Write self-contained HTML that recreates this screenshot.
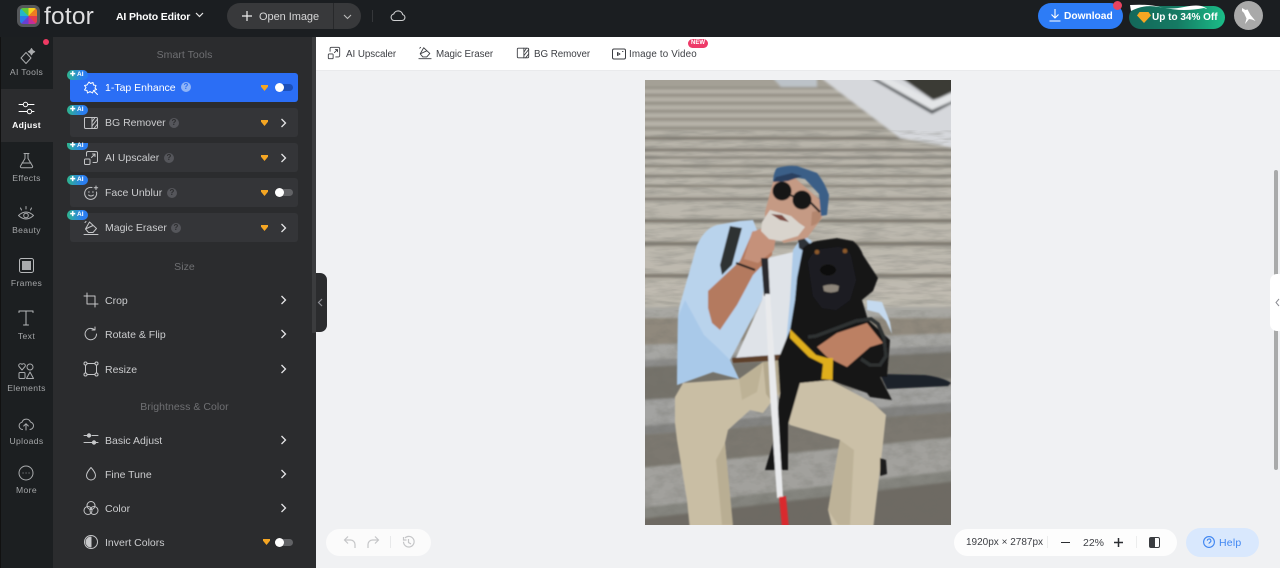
<!DOCTYPE html>
<html><head><meta charset="utf-8"><title>Fotor</title>
<style>
*{box-sizing:border-box}
html,body{margin:0;width:1280px;height:568px;overflow:hidden;background:#f0f1f3;font-family:"Liberation Sans",sans-serif}
.a{position:absolute}
.t{position:absolute;white-space:nowrap;line-height:14px;height:14px;margin-top:1px;font-size:10.5px;letter-spacing:0;color:#cbccce}
.r{position:absolute;width:53px;left:0;text-align:center;white-space:nowrap;font-size:8.6px;letter-spacing:.35px;line-height:12px;color:#a4a6a8}
.h{position:absolute;left:53px;width:263px;text-align:center;font-size:10.5px;letter-spacing:.05px;line-height:14px;color:#6f7073}
.row{position:absolute;left:70px;width:228px;height:29px;background:#343538;border-radius:3px}
.ai{position:absolute;left:67px;width:21px;height:10px;border-radius:5px;background:linear-gradient(90deg,#2fb58d,#2a7df0 75%);color:#fff;font:bold 6.5px/10px "Liberation Sans",sans-serif;padding-left:3px;white-space:nowrap}
.q{position:absolute;width:10px;height:10px;border-radius:50%;background:#55565b;color:#2c2d2f;font:bold 8px/10px "Liberation Sans",sans-serif;text-align:center}
.tg{position:absolute;left:275px;width:18px;height:7px;border-radius:4px;background:#626366}
.tg:before{content:"";position:absolute;left:0;top:-1px;width:9px;height:9px;border-radius:50%;background:#fff}
svg{position:absolute;overflow:visible}
.i{width:16px;height:16px;fill:none;stroke:#c4c5c7;stroke-width:1;stroke-linecap:round;stroke-linejoin:round}
.ch{width:8px;height:10px;fill:none;stroke:#e4e4e6;stroke-width:1.3;left:279px}
.gem{width:7px;height:6px;left:261px}
</style></head><body>
<svg width="0" height="0" style="position:absolute"><defs>
<symbol id="up" viewBox="0 0 16 16"><rect x="1.5" y="9" width="5.5" height="5.5" rx="1"/><path d="M3.5 6V3a1.5 1.5 0 0 1 1.5-1.5h8A1.5 1.5 0 0 1 14.5 3v8a1.5 1.5 0 0 1-1.5 1.5H10M8.5 7.5l3.5-3.5M9.500 4H12v2.500"/></symbol>
<symbol id="er" viewBox="0 0 16 16"><path d="M6.500 2l7 6.500-3.500 4H5.500L2.500 9zM2.500 9l7.500-3.500M1 14.500h14M3 1.500l-1 1"/></symbol>
<symbol id="bg" viewBox="0 0 16 16"><rect x="1.500" y="2.500" width="13" height="11" rx="1.200"/><path d="M9 2.500v11M9 7l3-4.500M9 11l5.500-7M11 13.500l3.500-4.500"/></symbol>
<symbol id="gem" viewBox="0 0 7 6"><path d="M0 0h7v1.800L3.500 6 0 1.800z" fill="#f5a623"/></symbol>
<symbol id="chev" viewBox="0 0 8 10"><path d="M2.500 1l4 4-4 4"/></symbol>
</defs></svg>

<!-- top bar -->
<div class="a" style="left:0;top:0;width:1280px;height:37px;background:#1b1e21"></div>
<div class="a" style="left:17px;top:5px;width:23px;height:22px;border-radius:6px;background:#55575a"></div>
<div class="a" style="left:20px;top:8px;width:17px;height:16px;border-radius:3px;background:conic-gradient(#f6d21f 0 12%,#ef7c22 12% 25%,#e63b4e 25% 38%,#c32f9a 38% 50%,#6a3fd0 50% 62%,#2b7be8 62% 75%,#24b7c9 75% 87%,#5ec63c 87% 100%)"></div>
<div class="a" style="left:44px;top:2px;font-size:24.5px;line-height:30px;color:#dfdfe0;letter-spacing:.2px">fotor</div>
<div class="t" style="left:116px;top:9px;color:#fff;font-weight:bold;font-size:10.5px;letter-spacing:-.15px">AI Photo Editor</div>
<svg style="left:195px;top:12px" width="9" height="7" fill="none" stroke="#e8e8e8" stroke-width="1.200"><path d="M1 1l3.500 3.500L8 1"/></svg>
<div class="a" style="left:227px;top:3px;width:134px;height:26px;border-radius:13px;background:#38393b"></div>
<div class="a" style="left:333px;top:3px;width:1px;height:26px;background:#28292b"></div>
<svg style="left:242px;top:11px" width="10" height="10" stroke="#eee" stroke-width="1.200"><path d="M5 0v10M0 5h10"/></svg>
<div class="t" style="left:259px;top:9px;font-size:11px;letter-spacing:-.05px;color:#d6d6d7">Open Image</div>
<svg style="left:343px;top:14px" width="9" height="6" fill="none" stroke="#bbb" stroke-width="1.100"><path d="M1 1l3.500 3.500L8 1"/></svg>
<div class="a" style="left:372px;top:10px;width:1px;height:12px;background:#35373a"></div>
<svg style="left:390px;top:9px" width="16" height="13" fill="none" stroke="#cfd0d1" stroke-width="1.100"><path d="M4 11.500h8a3 3 0 0 0 .7-5.900A4.700 4.700 0 0 0 3.700 5 3.300 3.300 0 0 0 4 11.500z"/></svg>

<div class="a" style="left:1038px;top:3px;width:85px;height:26px;border-radius:13px;background:#2d7cf6"></div>
<svg style="left:1049px;top:9px" width="12" height="13" fill="none" stroke="#fff" stroke-width="1.100"><path d="M6 0v8.500M2.500 5.500L6 9l3.500-3.500M.5 12h11"/></svg>
<div class="t" style="left:1064px;top:9px;color:#fff;font-size:10.2px;font-weight:bold;letter-spacing:0">Download</div>
<div class="a" style="left:1113px;top:1px;width:9px;height:9px;border-radius:50%;background:#e8435f"></div>
<div class="a" style="left:1129px;top:6px;width:96px;height:23px;border-radius:12px;background:linear-gradient(90deg,#14685a,#157a63 50%,#1bbd88)"></div>
<svg style="left:1129px;top:3px" width="76" height="8"><path d="M1 2q20-1 30 2t24 0 20 0 0 1q-10 2-20 2t-25-3-28 4z" fill="#fff"/></svg>
<svg style="left:1137px;top:12px" width="14" height="11"><path d="M2.500 0h9L14 3.500 7 11 0 3.500z" fill="#f5a623"/></svg>
<div class="t" style="left:1152px;top:10px;color:#fff;font-size:10px;font-weight:bold;letter-spacing:0">Up to 34% Off</div>
<div class="a" style="left:1234px;top:1px;width:29px;height:29px;border-radius:50%;background:#a9a9a9"></div>
<svg style="left:1241px;top:7px" width="16" height="18"><path d="M1 1l3.500 2 2 -.5 3 5.500 5 6-3.500-1.500-3-.5L4 17l1.500-5.500L3 6 1 4z" fill="#fff"/></svg>

<!-- rail -->
<div class="a" style="left:0;top:37px;width:53px;height:531px;background:#1c1f21"></div>
<div class="a" style="left:0;top:37px;width:1px;height:531px;background:#111"></div>
<div class="a" style="left:1px;top:89px;width:52px;height:53px;background:#2b2c2e"></div>
<div class="a" style="left:43px;top:39px;width:6px;height:6px;border-radius:50%;background:#ef3a63"></div>
<svg class="i" style="left:18px;top:47px;width:18px;height:18px;stroke:#a9abad"><path d="M8 5.500l5 5.500-5 5.500L3 11z"/><path d="M13.500 1.500l1.200 2 2 1.200-2 1.200-1.200 2-1.200-2-2-1.200 2-1.200z" fill="#a9abad"/></svg>
<div class="r" style="top:66px">AI Tools</div>
<svg class="i" style="left:18px;top:100px;stroke:#fff"><path d="M1 4.500h4M10 4.500h6M1 11.500h8M14 11.500h2"/><circle cx="7.500" cy="4.500" r="2.200"/><circle cx="11.500" cy="11.500" r="2.200"/></svg>
<div class="r" style="top:119px;color:#fff;font-weight:bold">Adjust</div>
<svg class="i" style="left:18px;top:152px;stroke:#a9abad;width:17px;height:17px"><path d="M6 1.500h5M7 1.500v5L2.500 14a1.200 1.200 0 0 0 1 1.800h10a1.200 1.200 0 0 0 1-1.800L10 6.500v-5M4 11h9"/></svg>
<div class="r" style="top:172px">Effects</div>
<svg class="i" style="left:17px;top:205px;stroke:#a9abad;width:18px;height:18px"><path d="M1.500 10.500q7.500-7 15 0q-7.500 7-15 0z"/><circle cx="9" cy="10.500" r="2.300"/><path d="M9 1.500v2.500M3.500 3l1 2M14.500 3l-1 2"/></svg>
<div class="r" style="top:224px">Beauty</div>
<svg class="i" style="left:19px;top:258px;stroke:#b6b8ba"><rect x=".5" y=".5" width="14" height="14" rx="2"/><rect x="3" y="3" width="9" height="9" fill="#a9abad" stroke="none"/></svg>
<div class="r" style="top:277px">Frames</div>
<svg class="i" style="left:18px;top:310px;stroke:#b6b8ba"><path d="M1 2.500V1h14v1.500M8 1v14M5.500 15h5"/></svg>
<div class="r" style="top:330px">Text</div>
<svg class="i" style="left:18px;top:363px;stroke:#a9abad"><path d="M4 7L1 3.500A1.800 1.800 0 0 1 4 1.500 1.800 1.800 0 0 1 7 3.500z"/><circle cx="12" cy="4" r="3"/><rect x="1" y="9.500" width="6" height="6" rx="1"/><path d="M12 9l3.500 6.500h-7z"/></svg>
<div class="r" style="top:382px">Elements</div>
<svg class="i" style="left:18px;top:416px;stroke:#a9abad"><path d="M4.500 13.500A3.700 3.700 0 0 1 4 6.200a4.500 4.500 0 0 1 8.500-.2 3.800 3.800 0 0 1-.5 7.500M8 14V8M5.700 10L8 7.700l2.300 2.300"/></svg>
<div class="r" style="top:435px">Uploads</div>
<svg class="i" style="left:18px;top:465px;stroke:#a9abad"><circle cx="8" cy="8" r="7"/><path d="M5 8h.1M8 8h.1M11 8h.1"/></svg>
<div class="r" style="top:484px">More</div>

<!-- panel -->
<div class="a" style="left:53px;top:37px;width:263px;height:531px;background:#2b2c2e"></div>
<div class="a" style="left:312px;top:37px;width:4px;height:296px;background:#3b3c3e"></div>
<div class="a" style="left:316px;top:273px;width:11px;height:59px;background:#2b2c2e;border-radius:0 7px 7px 0"></div>
<svg style="left:317px;top:298px" width="6" height="9" fill="none" stroke="#8d8e94" stroke-width="1.200"><path d="M5 1L1.500 4.500 5 8"/></svg>

<div class="h" style="top:48px">Smart Tools</div>
<div class="row" style="top:73px;background:#2b6ef5"></div>
<div class="row" style="top:108px"></div>
<div class="row" style="top:143px"></div>
<div class="row" style="top:178px"></div>
<div class="row" style="top:213px"></div>
<div class="ai" style="top:70px">✚ AI</div>
<div class="ai" style="top:105px">✚ AI</div>
<div class="ai" style="top:143px;height:7px;line-height:5px;border-radius:0 0 5px 5px">✚ AI</div>
<div class="ai" style="top:175px">✚ AI</div>
<div class="ai" style="top:210px">✚ AI</div>

<svg class="i" style="left:83px;top:80px;stroke:#fff"><path d="M6 2l1.500 1.500L10 2.500l.5 2.500 2.500.5-1 2.500 1.500 1.500-3 1-1 2.500L7 11.500 4.500 13 4 10.500 1.500 10 3 7.500 1.500 5.500 4 5zM11 11l3.500 3.500"/></svg>
<div class="t" style="left:105px;top:80px;color:#fff">1-Tap Enhance</div>
<div class="q" style="left:181px;top:82px;background:#8fb4f7;color:#2b6ef5">?</div>
<svg class="gem" style="top:85px"><use href="#gem"/></svg>
<div class="tg" style="top:84px;background:#1c4fb8"></div>

<svg class="i" style="left:83px;top:115px"><use href="#bg"/></svg>
<div class="t" style="left:105px;top:115px">BG Remover</div>
<div class="q" style="left:169px;top:118px">?</div>
<svg class="gem" style="top:120px"><use href="#gem"/></svg>
<svg class="ch" style="top:118px"><use href="#chev"/></svg>

<svg class="i" style="left:83px;top:150px"><use href="#up"/></svg>
<div class="t" style="left:105px;top:150px">AI Upscaler</div>
<div class="q" style="left:164px;top:153px">?</div>
<svg class="gem" style="top:155px"><use href="#gem"/></svg>
<svg class="ch" style="top:153px"><use href="#chev"/></svg>

<svg class="i" style="left:83px;top:185px"><path d="M13.500 7a6 6 0 1 1-4.500-4.500M5.500 7h.8M9.500 7h.8M5.500 10q2.500 2 5 0M13 1v3.500M11.200 2.700h3.500"/></svg>
<div class="t" style="left:105px;top:185px">Face Unblur</div>
<div class="q" style="left:167px;top:188px">?</div>
<svg class="gem" style="top:190px"><use href="#gem"/></svg>
<div class="tg" style="top:189px"></div>

<svg class="i" style="left:83px;top:220px"><use href="#er"/></svg>
<div class="t" style="left:105px;top:220px">Magic Eraser</div>
<div class="q" style="left:171px;top:223px">?</div>
<svg class="gem" style="top:225px"><use href="#gem"/></svg>
<svg class="ch" style="top:223px"><use href="#chev"/></svg>

<div class="h" style="top:260px">Size</div>
<svg class="i" style="left:83px;top:292px"><path d="M4 1v11h11M1 4h11v11"/></svg>
<div class="t" style="left:105px;top:293px">Crop</div>
<svg class="ch" style="top:295px"><use href="#chev"/></svg>
<svg class="i" style="left:83px;top:326px"><path d="M13.500 8a5.700 5.700 0 1 1-2-4.300M12 1v3h-3"/></svg>
<div class="t" style="left:105px;top:327px">Rotate &amp; Flip</div>
<svg class="ch" style="top:329px"><use href="#chev"/></svg>
<svg class="i" style="left:83px;top:361px"><rect x="2.500" y="2.500" width="11" height="11"/><rect x="1" y="1" width="3" height="3" rx="1.400" fill="#2b2c2e"/><rect x="12" y="1" width="3" height="3" rx="1.400" fill="#2b2c2e"/><rect x="1" y="12" width="3" height="3" rx="1.400" fill="#2b2c2e"/><rect x="12" y="12" width="3" height="3" rx="1.400" fill="#2b2c2e"/></svg>
<div class="t" style="left:105px;top:362px">Resize</div>
<svg class="ch" style="top:364px"><use href="#chev"/></svg>

<div class="h" style="top:400px">Brightness &amp; Color</div>
<svg class="i" style="left:83px;top:431px"><path d="M1 4.500h3M9 4.500h6M1 11.500h8M13 11.500h2"/><circle cx="6" cy="4.500" r="1.700" fill="#c9cacc"/><circle cx="11" cy="11.500" r="1.700" fill="#c9cacc"/></svg>
<div class="t" style="left:105px;top:433px">Basic Adjust</div>
<svg class="ch" style="top:435px"><use href="#chev"/></svg>
<svg class="i" style="left:83px;top:466px"><path d="M8 1.500q4.500 5 4.500 8a4.500 4.500 0 0 1-9 0q0-3 4.500-8z"/></svg>
<div class="t" style="left:105px;top:467px">Fine Tune</div>
<svg class="ch" style="top:469px"><use href="#chev"/></svg>
<svg class="i" style="left:83px;top:500px"><circle cx="8" cy="5.500" r="4"/><circle cx="5" cy="10.500" r="4"/><circle cx="11" cy="10.500" r="4"/></svg>
<div class="t" style="left:105px;top:501px">Color</div>
<svg class="ch" style="top:503px"><use href="#chev"/></svg>
<svg class="i" style="left:83px;top:534px"><circle cx="8" cy="8" r="6.500"/><path d="M8 3a5 5 0 0 0 0 10z" fill="#c9cacc"/></svg>
<div class="t" style="left:105px;top:535px">Invert Colors</div>
<svg class="gem" style="top:539px;left:263px"><use href="#gem"/></svg>
<div class="tg" style="top:539px"></div>

<!-- second bar -->
<div class="a" style="left:316px;top:37px;width:964px;height:34px;background:#fff;border-bottom:1px solid #e9eaec"></div>
<svg class="i" style="left:327px;top:46px;width:14px;height:14px;stroke:#3b3d42"><use href="#up"/></svg>
<div class="t" style="left:346px;top:47px;color:#3d3f44;font-size:9.8px;letter-spacing:-.05px">AI Upscaler</div>
<svg class="i" style="left:418px;top:46px;width:14px;height:14px;stroke:#3b3d42"><use href="#er"/></svg>
<div class="t" style="left:436px;top:47px;color:#3d3f44;font-size:9.8px;letter-spacing:-.05px">Magic Eraser</div>
<svg class="i" style="left:516px;top:46px;width:14px;height:14px;stroke:#3b3d42"><use href="#bg"/></svg>
<div class="t" style="left:534px;top:47px;color:#3d3f44;font-size:9.8px;letter-spacing:-.05px">BG Remover</div>
<svg class="i" style="left:611px;top:46px;width:14px;height:14px;stroke:#3b3d42"><rect x="1.500" y="3" width="13" height="10" rx="1.500"/><path d="M6.500 6.500v3l2.500-1.500zM11.500 5.500h.5"/></svg>
<div class="t" style="left:629px;top:47px;color:#3d3f44;font-size:9.8px;letter-spacing:.15px">Image to Video</div>
<div class="a" style="left:688px;top:39px;width:20px;height:9px;border-radius:5px;background:#ee3a68;color:#fff;font:bold 6px/9px 'Liberation Sans',sans-serif;text-align:center">NEW</div>

<!-- photo -->
<svg style="left:645px;top:80px" width="306" height="445" viewBox="645 80 306 445">
<defs>
<filter id="b" x="-5%" y="-5%" width="110%" height="110%"><feGaussianBlur stdDeviation=".8"/></filter>
<filter id="b2" x="-5%" y="-5%" width="110%" height="110%"><feGaussianBlur stdDeviation="1.200"/></filter>
<filter id="n" x="0" y="0" width="100%" height="100%"><feTurbulence type="fractalNoise" baseFrequency=".035 .2" numOctaves="3" seed="4"/><feColorMatrix values="0 0 0 0 .2 0 0 0 0 .2 0 0 0 0 .18 1.600 0 0 0 -.62"/></filter>
<filter id="n2" x="0" y="0" width="100%" height="100%"><feTurbulence type="fractalNoise" baseFrequency=".07 .12" numOctaves="3" seed="9"/><feColorMatrix values="0 0 0 0 .15 0 0 0 0 .15 0 0 0 0 .13 1.700 0 0 0 -.65"/></filter>
<linearGradient id="st" x1="0" y1="0" x2="0" y2="1"><stop offset="0" stop-color="#a4a096"/><stop offset=".4" stop-color="#aaa69c"/><stop offset="1" stop-color="#b6b1a6"/></linearGradient>
<clipPath id="c"><rect x="645" y="80" width="306" height="445"/></clipPath>
</defs>
<g clip-path="url(#c)">
<rect x="645" y="80" width="306" height="445" fill="#8f8c83"/>
<rect x="645" y="80" width="306" height="235" fill="url(#st)"/>
<g filter="url(#b2)">
<g fill="#7d796e" opacity=".5">
<rect x="640" y="87" width="205" height="1.500"/><rect x="640" y="94" width="205" height="2"/><rect x="640" y="102" width="225" height="2"/><rect x="640" y="110" width="235" height="2"/><rect x="640" y="118" width="245" height="2"/><rect x="640" y="127" width="255" height="2.500"/>
</g>
<g fill="#c9c5bc" opacity=".5">
<rect x="640" y="90" width="205" height="3"/><rect x="640" y="98" width="215" height="3"/><rect x="640" y="106" width="230" height="3"/><rect x="640" y="114" width="245" height="3"/><rect x="640" y="122" width="255" height="3.500"/><rect x="640" y="131" width="265" height="4"/><rect x="640" y="141" width="316" height="6"/><rect x="640" y="152" width="316" height="4"/><rect x="640" y="159" width="316" height="5"/><rect x="640" y="168" width="316" height="6"/><rect x="640" y="178" width="316" height="6"/><rect x="640" y="188" width="316" height="8"/><rect x="640" y="201" width="316" height="17"/><rect x="640" y="224" width="316" height="16"/><rect x="640" y="248" width="316" height="24"/><rect x="640" y="280" width="316" height="30"/>
</g>
<g fill="#5a574e" opacity=".6">
<rect x="640" y="137" width="316" height="2.500"/><rect x="640" y="149" width="316" height="2.500"/><rect x="640" y="156.500" width="316" height="2"/><rect x="640" y="165" width="316" height="2"/><rect x="640" y="175" width="316" height="2"/><rect x="640" y="185" width="316" height="2"/><rect x="640" y="198" width="316" height="2.500"/><rect x="640" y="219" width="316" height="3.500"/><rect x="640" y="242" width="316" height="3.500"/><rect x="640" y="274" width="316" height="3.500"/>
</g>
<path d="M817 75H960V149L900 138z" fill="#d6d8dc"/>
<path d="M770 75h47v12h-36z" fill="#bcc2c8"/>
<path d="M897 75h60v18l-24 7z" fill="#3a3a36"/>
<path d="M870 75l62 39 25-12v-12l-24 11-50-26z" fill="#e3e5e7"/>
<path d="M870 78l62 36 25-13v-2l-25 11-57-32z" fill="#55595c"/>
</g>
<rect x="645" y="130" width="306" height="180" filter="url(#n)" opacity=".5"/>
<g filter="url(#b2)">
<path d="M640 307H956V318H640z" fill="#a8a7a2"/>
<path d="M640 318H956V350L640 348z" fill="#90897d"/>
<path d="M640 345L956 333V350L640 367z" fill="#a6a6a3"/>
<path d="M640 360L956 345V352L640 367z" fill="#8d8d8b"/>
<path d="M640 367L956 352V378L640 401z" fill="#75726a"/>
<path d="M640 400L956 385V412L640 435z" fill="#a3a3a1"/>
<path d="M640 426L956 402V412L640 435z" fill="#838381"/>
<path d="M640 435L956 412V440L640 470z" fill="#7b7870"/>
<path d="M640 468L956 437V472L640 510z" fill="#a2a19d"/>
<path d="M640 508L956 470V482L640 519z" fill="#85857f"/>
<path d="M640 519L956 481V530H640z" fill="#6e6b63"/>
</g>
<rect x="645" y="310" width="306" height="215" filter="url(#n2)" opacity=".32"/>
<g filter="url(#b)">
<!-- tail -->
<path d="M880 374L925 375Q945 378 951 383L948 386L887 389z" fill="#1f2329"/>
<!-- trousers -->
<path d="M675 423L675 397L683 383L739 379L763 362L786 367L778 393L763 413L750 410L728 430L725 443L733 530H690L687 500L677 440z" fill="#c9bea4"/>
<path d="M778 393L800 383L830 380L873 403L886 415L883 443L873 530H833L828 510L840 440L790 425L782 413z" fill="#cbc0a7"/>
<path d="M763 362l16-2 3 30-10 12-6-8z" fill="#b3a88d"/>
<path d="M739 379L763 362L757 392L742 400z" fill="#bdb296"/>
<path d="M725 443L733 525H722L716 460z" fill="#b9ae93"/>
<path d="M840 440L828 510L838 525H850L854 450z" fill="#bdb298"/>
<!-- undershirt -->
<path d="M768 258L797 251L790 308L785 357L735 360L762 300z" fill="#dfe3e8"/>
<path d="M732 358L786 354L786 360L733 363z" fill="#5d3f2a"/>
<!-- shirt -->
<path d="M679 308L697 245Q705 228 717 225L740 221L753 220L768 258L762 300L730 360L739 379L713 372L677 385L678 317z" fill="#b9d3ec"/>
<path d="M685 300L678 317L677 385L713 372L739 379L730 360L718 348L704 335z" fill="#a9c9e9"/>
<path d="M793 250L803 235L812 241L800 262L795 300L790 343L786 343L790 300z" fill="#aecbe8"/>
<!-- strap -->
<path d="M730 226L742 228L732 265L722 275L720 265z" fill="#2f3033"/>
<path d="M798 240l6-2 6 6-5 8-6-4z" fill="#2f3138"/>
<!-- arm -->
<path d="M708 308L708 291L740 261L753 231L773 241L772 255L753 275L737 305L720 330L712 323L708 308z" fill="#b47a5f"/>
<path d="M736 263L755 270" stroke="#1e1e1f" stroke-width="2" fill="none"/>
<path d="M752 232l16-6 8 10-2 14-16 13-14-4z" fill="#c5917a"/>
<!-- dog body -->
<path d="M803 248Q808 243 817 241L837 238L853 241Q860 246 863 255L878 278L873 291L862 300L868 320L890 340L887 377L880 377L892 400L870 397L867 393L830 380L800 383L788 425L788 470L765 470L773 443L780 393L778 360L790 330L795 300L797 278z" fill="#141417"/>
<path d="M880 458l6 2 1 14-7 2z" fill="#1a1a1c"/>
<path d="M808 262Q813 250 822 249L838 247Q848 248 851 256L856 280L850 300L836 310L822 308L813 296z" fill="#1f1f23"/>
<ellipse cx="828" cy="270" rx="8" ry="5.500" fill="#0b0b0c"/>
<circle cx="817" cy="252" r="2.300" fill="#8d5a2c"/><circle cx="845" cy="251" r="2.300" fill="#8d5a2c"/>
<path d="M823 286q9-3 16 0l-1 5q-7 3-14 0z" fill="#8d857a"/>
<!-- head -->
<path d="M765 212L773 182L795 178L820 200L822 218L807 238L784 243L765 229z" fill="#c59a84"/>
<path d="M812 212q8-3 9 4-1 8-10 10z" fill="#b3866e"/>
<path d="M762 222L770 210L791 216L799 223L805 227L798 236L781 241L769 239L761 231z" fill="#d9d4cd"/>
<path d="M771 214l11 1 7 7-9-2z" fill="#7c4a3f"/>
<path d="M773 181Q774 171 777 168Q787 165 797 166L817 173Q825 183 829 195L827 215L821 216L819 194L805 179L789 176z" fill="#3b5e87"/>
<path d="M773 182l3-5 16-4 10 3-14 5z" fill="#2a415f"/>
<circle cx="782" cy="191" r="9.500" fill="#151619"/><circle cx="802" cy="200" r="9.500" fill="#151619"/>
<path d="M790 195l5 2M810 202l10 10" stroke="#1a1a1c" stroke-width="2"/>
<!-- arm on dog, leash -->
<path d="M817 347L837 333L867 323L883 343L870 347L847 367L827 357z" fill="#bc8064"/>
<path d="M808 337l8-1 40-15 15-2 7 5 6 14 2 18-6 9-10 0-9-6" stroke="#2f3032" stroke-width="3.500" fill="none"/>
<path d="M867 300l15 2 8 20 2 12-6-13-7-8-12-3z" fill="#c4d9ee"/>
<!-- harness -->
<path d="M790 329l8 8 18 18 11 3 6 0-.5 22-11-1 1.500-15-14-7-19-19z" fill="#dfae1e"/>
<!-- cane -->
<path d="M761 258l7 0 2 38-6 0z" fill="#2b2b2e"/>
<path d="M765 294l5 0 7 100 6 103-6 1-7-104z" fill="#e9eaec"/>
<path d="M779 497l7-1 3 32h-7z" fill="#d92c2f"/>
</g>
</g>
</svg>

<!-- bottom pills -->
<div class="a" style="left:326px;top:529px;width:105px;height:27px;border-radius:14px;background:#fbfbfb"></div>
<svg style="left:343px;top:535px" width="14" height="14" fill="none" stroke="#c5c6c8" stroke-width="1.200"><path d="M5 1.500L1.500 5 5 8.500M1.500 5h6a4.500 4.500 0 0 1 4.500 4.500V13"/></svg>
<svg style="left:366px;top:535px" width="14" height="14" fill="none" stroke="#c5c6c8" stroke-width="1.200"><path d="M9 1.500L12.500 5 9 8.500M12.500 5h-6A4.500 4.500 0 0 0 2 9.500V13"/></svg>
<div class="a" style="left:390px;top:536px;width:1px;height:12px;background:#e8e9ea"></div>
<svg style="left:402px;top:535px" width="14" height="14" fill="none" stroke="#c5c6c8" stroke-width="1.200"><path d="M3 3a5.300 5.300 0 1 1-1.500 3.800M6.500 4v3.500l2.500 1.500M1.500 2v3h3"/></svg>

<div class="a" style="left:954px;top:529px;width:223px;height:27px;border-radius:14px;background:#fdfdfd"></div>
<div class="t" style="left:966px;top:535px;color:#3d3f44;font-size:10px;letter-spacing:0">1920px × 2787px</div>
<div class="a" style="left:1047px;top:536px;width:1px;height:12px;background:#eceded"></div>
<div class="a" style="left:1061px;top:541.500px;width:9px;height:1.500px;background:#2b2d31"></div>
<div class="t" style="left:1083px;top:535px;color:#3d3f44;font-size:10.500px;letter-spacing:0">22%</div>
<svg style="left:1114px;top:538px" width="9" height="9" stroke="#2b2d31" stroke-width="1.500"><path d="M4.500 0v9M0 4.500h9"/></svg>
<div class="a" style="left:1136px;top:536px;width:1px;height:12px;background:#eceded"></div>
<svg style="left:1149px;top:537px" width="11" height="11"><rect x=".5" y=".5" width="10" height="10" rx="1.500" fill="none" stroke="#3a3c40"/><path d="M1 1h5v9H1z" fill="#3a3c40"/></svg>

<div class="a" style="left:1186px;top:528px;width:73px;height:29px;border-radius:15px;background:#d9e8fd"></div>
<svg style="left:1203px;top:536px" width="12" height="12" fill="none" stroke="#3f86f2" stroke-width="1.100"><circle cx="6" cy="6" r="5.400"/><path d="M4.300 4.700a1.800 1.800 0 1 1 2.600 1.700c-.6.300-.9.700-.9 1.300M6 9.200v.2"/></svg>
<div class="t" style="left:1219px;top:535px;color:#3f86f2;font-size:10.500px;letter-spacing:.2px">Help</div>

<!-- right side -->
<div class="a" style="left:1274px;top:170px;width:4px;height:300px;border-radius:2px;background:#a9aaaa"></div>
<div class="a" style="left:1270px;top:274px;width:10px;height:57px;border-radius:7px 0 0 7px;background:#fff"></div>
<svg style="left:1275px;top:298px" width="5" height="9" fill="none" stroke="#8d8e94" stroke-width="1"><path d="M4 1L1 4.500 4 8"/></svg>
</body></html>
